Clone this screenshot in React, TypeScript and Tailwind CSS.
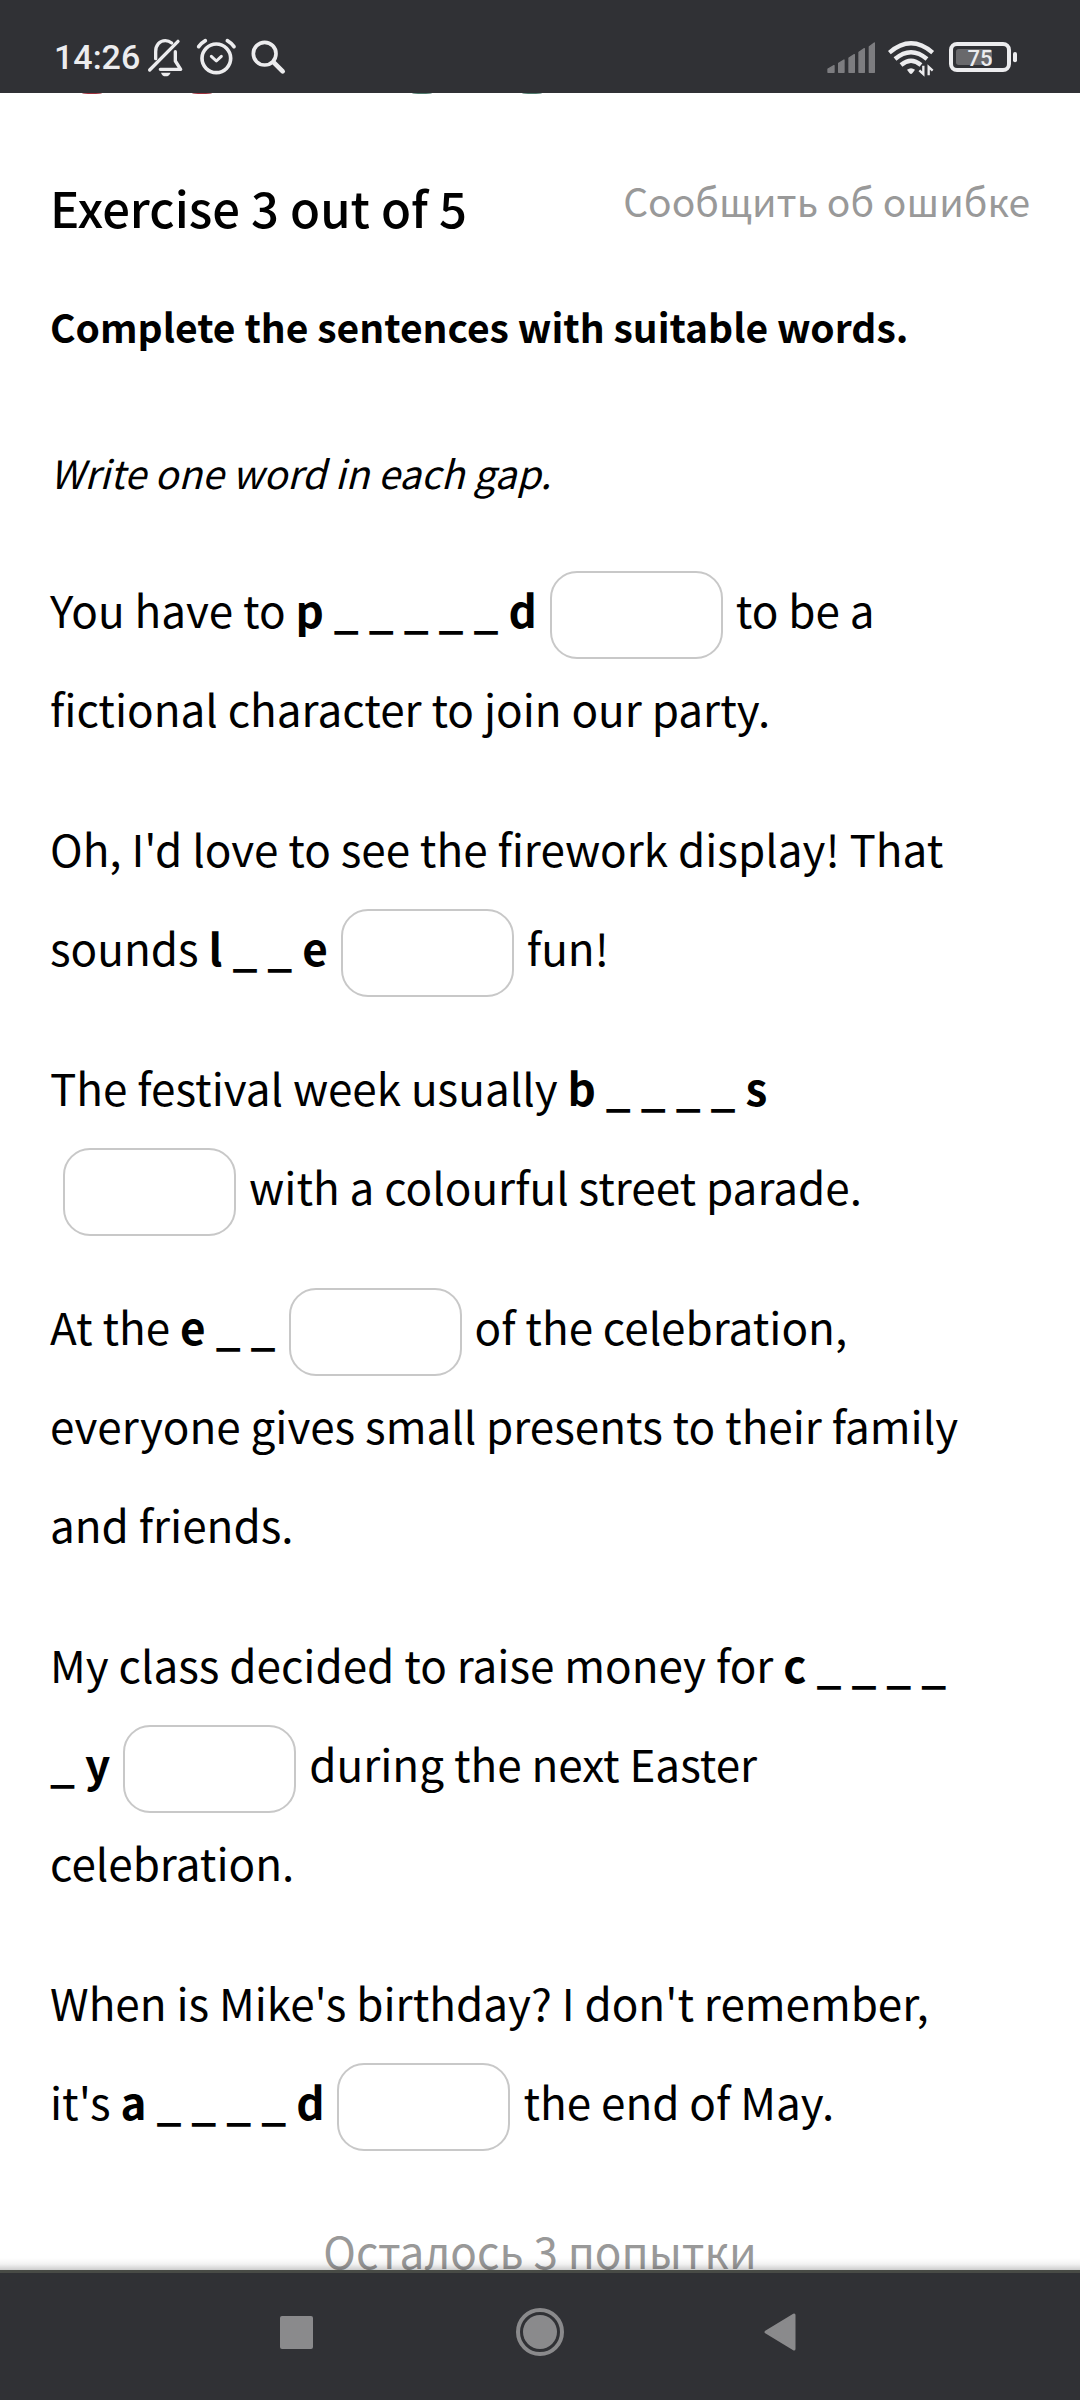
import type { ReactNode } from 'react'

const sentences: { id: string; content: ReactNode }[] = [
  {
    id: 'pretend',
    content: (
      <>
        You have to <b>p _ _ _ _ _ d</b>
        <Gap id="pretend" after="to" /> be a fictional character to join our party.
      </>
    ),
  },
  {
    id: 'like',
    content: (
      <>
        Oh, I'd love to see the firework display! That sounds <b>l _ _ e</b>
        <Gap id="like" after="fun!" />
      </>
    ),
  },
  {
    id: 'begins',
    content: (
      <>
        The festival week usually <b>b _ _ _ _ s</b>
        <Gap id="begins" after="with" /> a colourful street parade.
      </>
    ),
  },
  {
    id: 'end',
    content: (
      <>
        At the <b>e _ _</b>
        <Gap id="end" after="of" /> the celebration, everyone gives small presents to their family and friends.
      </>
    ),
  },
  {
    id: 'charity',
    content: (
      <>
        My class decided to raise money for <b>c _ _ _ _</b>{' '}
        <Gap id="charity" before="_ y" after="during" /> the next Easter celebration.
      </>
    ),
  },
  {
    id: 'around',
    content: (
      <>
        When is Mike's birthday? I don't remember, it's <b>a _ _ _ _ d</b>
        <Gap id="around" after="the" /> end of May.
      </>
    ),
  },
]

/* Answer box, kept on one line with the words that touch it */
function Gap({ id, before, after }: { id: string; before?: string; after: string }) {
  return (
    <span className="whitespace-nowrap">
      {before && <b>{before}</b>}
      <input
        id={id}
        type="text"
        aria-label={`Missing word starting with ${id.charAt(0)}`}
        className="mx-[13px] -mt-[5px] -mb-[3px] h-[88px] w-[173px] rounded-[27px] border-2 border-[#c8c8c8] bg-white px-4 align-middle outline-none"
      />
      {after}
    </span>
  )
}

function StatusBar() {
  return (
    <header className="flex h-[93px] shrink-0 items-start justify-between bg-[#303135] pr-[62px] pl-[54px] pt-[38px] text-[#ececee]">
      <div className="flex gap-[7px]">
        <time className="font-['Roboto',sans-serif] text-[34px] leading-[39px] font-medium">14:26</time>
        <div className="flex gap-3">
          {/* Muted bell */}
          <svg width="37" height="39" viewBox="441 114 111 117" fill="none" stroke="currentColor" strokeWidth="10" strokeLinecap="round" strokeLinejoin="round">
            <path d="M467 176v-21c0-20 12-33 29-33 8 0 14 3 19 7" />
            <path d="M526 155v28l16 25h-61" />
            <path d="M534 124 449 210" />
            <path d="M483 218h29c-3 7-8 11-15 11s-12-4-14-11z" fill="currentColor" stroke="none" />
          </svg>
          {/* Alarm */}
          <svg width="41" height="39" viewBox="588 114 123 117" fill="none" stroke="currentColor" strokeWidth="11" strokeLinecap="round" strokeLinejoin="round">
            <circle cx="649" cy="175" r="43" />
            <path d="M596 140q8-11 20-18M682 122q12 7 20 18" />
            <path d="m634 169 15 14 15-14" strokeWidth="9" />
          </svg>
          {/* Search */}
          <svg width="37" height="39" viewBox="747 114 111 117" fill="none" stroke="currentColor" strokeLinecap="round">
            <circle cx="794" cy="161" r="34" strokeWidth="11" />
            <path d="m821 187 27 27" strokeWidth="14" />
          </svg>
        </div>
      </div>

      <div className="flex gap-3">
        {/* Signal */}
        <svg width="50" height="39" viewBox="198 114 150 117" fill="#7d7d80" stroke="#7d7d80" strokeWidth="4" strokeLinejoin="round">
          <path d="M204 207l18-10v20h-18zM236 190l16-10v37h-16zM267 174l16-10v53h-16zM297 157l16-11v71h-16zM328 140l15-11v88h-15z" />
        </svg>
        {/* Wi-Fi */}
        <svg width="48" height="39" viewBox="384 114 144 117" fill="none" stroke="currentColor" strokeWidth="13" strokeLinecap="butt">
          <path d="M388 158q65-56 130 0" />
          <path d="M405 177q48-41 96 0" />
          <path d="M423 195q30-25 60 0" />
          <path d="M441 209q12-9 24 0l-8 11q-4 4-8 0z" fill="currentColor" stroke="none" />
          <path d="M490 197v25l-12-11M506 226v-25l12 11" strokeWidth="7" />
        </svg>
        {/* Battery */}
        <svg width="70" height="39" viewBox="564 114 210 117" fill="none">
          <rect x="588" y="147" width="108" height="48" rx="8" fill="#69696c" />
          <rect x="573" y="132" width="174" height="78" rx="18" stroke="currentColor" strokeWidth="12" />
          <rect x="759" y="156" width="12" height="31" rx="6" fill="currentColor" />
          <text x="660" y="197" textAnchor="middle" fontFamily="Roboto, sans-serif" fontSize="66" fontWeight="500" fill="currentColor">
            75
          </text>
        </svg>
      </div>
    </header>
  )
}

function NavBar() {
  return (
    <nav className="relative flex h-[130px] shrink-0 items-start justify-center gap-[194px] border-t-[3px] border-[#484b46] bg-[#303135] pt-[34px] text-[#8a8a8c]">
      {/* Shadow cast on the page */}
      <div className="pointer-events-none absolute inset-x-0 bottom-full mb-[3px] h-3 bg-linear-to-b from-transparent via-black/5 to-black/20" />
      <button type="button" aria-label="Recent apps">
        <svg width="50" height="50" viewBox="0 0 50 50" fill="currentColor">
          <rect x="9" y="9" width="33" height="33" rx="2" />
        </svg>
      </button>
      <button type="button" aria-label="Home">
        <svg width="50" height="50" viewBox="0 0 50 50" fill="currentColor">
          <circle cx="25" cy="25" r="17" />
          <circle cx="25" cy="25" r="22" fill="none" stroke="currentColor" strokeWidth="4" />
        </svg>
      </button>
      <button type="button" aria-label="Back">
        <svg width="50" height="50" viewBox="0 0 50 50" fill="currentColor" stroke="currentColor" strokeWidth="3" strokeLinejoin="round">
          <path d="M7 25 35 8v34z" />
        </svg>
      </button>
    </nav>
  )
}

export default function App() {
  return (
    <div className="flex h-screen flex-col overflow-hidden bg-white font-['Noto_Sans_CJK_SC',sans-serif] text-black">
      <StatusBar />

      <main className="min-h-0 flex-1 overflow-y-auto [scrollbar-width:none]">
        {/* Bottom edge of the site logo */}
        <svg className="block" width="600" height="2" viewBox="0 0 600 2">
          <ellipse cx="92" cy="0" rx="10" ry="1" fill="#a0303c" />
          <ellipse cx="202" cy="0" rx="10" ry="1" fill="#a0303c" />
          <ellipse cx="422" cy="0" rx="10" ry="1" fill="#4f7a6c" />
          <ellipse cx="532" cy="0" rx="10" ry="1" fill="#4f7a6c" />
        </svg>

        <div className="px-[50px] pt-[72px]">
          <div className="flex items-start justify-between">
            <h1 className="text-[49px] leading-[80px] font-medium">Exercise 3 out of 5</h1>
            <a href="#report" className="text-[39px] leading-[66px] text-[#999999]">
              Сообщить об ошибке
            </a>
          </div>

          <h2 className="mt-[46px] text-[39px] leading-[66px] font-bold">Complete the sentences with suitable words.</h2>
          <p className="mt-20 text-[39px] leading-[66px] italic">Write one word in each gap.</p>

          <form className="mt-[55px] flex flex-col gap-[41px] pr-10 text-[44px] leading-[99px]">
            {sentences.map((s) => (
              <p key={s.id}>{s.content}</p>
            ))}
          </form>

          <p className="mt-[50px] text-center text-[44px] leading-[99px] text-[#999999]">Осталось 3 попытки</p>
        </div>
      </main>

      <NavBar />
    </div>
  )
}
